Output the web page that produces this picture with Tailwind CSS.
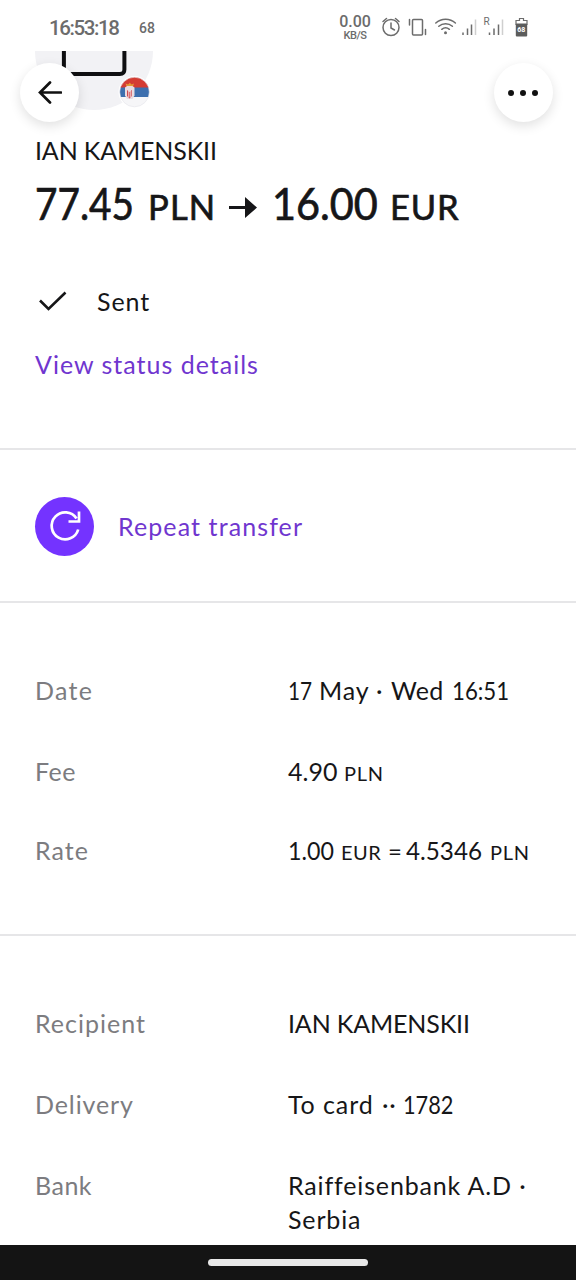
<!DOCTYPE html>
<html lang="en">
<head>
<meta charset="utf-8">
<title>Transfer details</title>
<script src="https://cdn.jsdelivr.net/npm/@tailwindcss/browser@4"></script>
</head>
<body class="bg-white">
<div class="flex h-[1280px] w-[576px] flex-col overflow-hidden bg-white font-['Lato','Noto_Sans',sans-serif] text-[25px] leading-[34px] text-[#161618]">
  <header class="flex h-[51px] shrink-0 items-start pl-[49px] font-['Roboto',sans-serif] text-[#6c6c6c]">
    <div class="mt-4 w-[90px] text-[20.5px] leading-6 font-medium tracking-[-1.4px]">16:53:18</div>
    <div class="mt-[18px] w-[197px] text-[14px] leading-5 font-medium">68</div>
    <div class="mt-[14px] flex w-[38px] flex-col items-center font-medium">
      <span class="text-[16px] leading-[16px]">0.00</span>
      <span class="text-[11px] leading-[11px] tracking-[-0.4px]">KB/S</span>
    </div>
    <svg class="ml-1 mt-3 h-8 w-[160px]" viewBox="378 12 160 32" fill="none" stroke="#6c6c6c" stroke-width="1.5" stroke-linecap="round">
      <circle cx="391" cy="27.5" r="8"/><path d="M391 23v5l3.5 2M383 21.5l3.5-3M399 21.5l-3.500-3"/>
      <rect x="412.500" y="19.500" width="10" height="15.500" rx="1"/><path d="M409.500 19.500v5.500M425.500 29.500v5"/>
      <path d="M435.800 23a14.500 14.500 0 0 1 19.600 0M438.800 26.300a10 10 0 0 1 13.600 0M441.800 29.300a6 6 0 0 1 7.600 0"/>
      <circle cx="445.500" cy="32.800" r="1.500" fill="#6c6c6c" stroke="none"/>
      <g stroke-linecap="butt"><path d="M463 32.500v2.500M467.500 28.500v6.500M471.500 24.500v10.500M489.500 32.500v2.500M494 28.500v6.500M498.500 24.500v10.500"/><path d="M475.500 19.500v15.500M502.500 19.500v15.500" stroke="#cfcfcf"/></g>
      <text x="483.500" y="25" font-size="10" fill="#6c6c6c" stroke="none">R</text>
      <path d="M519.500 18.500h4v2h3.500v4h-11v-4h3.500z" stroke-width="1.200"/>
      <rect x="515.800" y="23.500" width="11.400" height="13" rx="1" fill="#5c5c5c" stroke="none"/>
      <text x="517.200" y="31.500" font-size="7" font-weight="700" fill="#fff" stroke="none">68</text>
    </svg>
  </header>

  <main class="relative flex h-[1194px] shrink-0 flex-col overflow-hidden">
    <svg class="absolute left-0 top-0 h-[82px] w-[170px]" viewBox="0 51 170 82">
      <circle cx="94" cy="51" r="59" fill="#f2f2f5"/>
      <path d="M63.900 45v24.500q0 4.500 4.500 4.500h51.500q4.500 0 4.500-4.500V45" fill="none" stroke="#0f0f11" stroke-width="4"/>
      <circle cx="134.500" cy="92" r="16" fill="#fff"/>
      <clipPath id="flag"><circle cx="134.500" cy="92" r="14.700"/></clipPath>
      <g clip-path="url(#flag)">
        <path d="M119 76h31v12h-31z" fill="#d43c33"/><path d="M119 87.500h31v9.500h-31z" fill="#3d6fae"/><path d="M119 97h31v11h-31z" fill="#f6f6f8"/>
        <path d="M125 87.500l2-1.500h5.500l2 1.500v8l-2 3.500h-5.500l-2-3.500z" fill="#e9dbe0"/>
        <path d="M127 90l2.500 2 2.500-2v6l-2.500 2.500-2.500-2.500z" fill="#cf4a50"/>
        <path d="M128.800 91v6.500M130.800 91v6.500" stroke="#fff" stroke-width=".8"/>
        <path d="M126.500 86l-1-2.500 2.500 1 1.800-1.800 1.800 1.800 2.500-1-1 2.500z" fill="#e39a35"/>
      </g>
      <circle cx="134.500" cy="92" r="14.800" fill="none" stroke="#e4e4ea" stroke-width=".6"/>
    </svg>
    <button class="absolute left-5 top-3 grid size-[59px] place-items-center rounded-full bg-white shadow-[0_4px_12px_rgba(0,0,0,0.12)]">
      <svg class="h-6 w-6" viewBox="0 0 24 24" fill="none" stroke="#111" stroke-width="2.700" stroke-linecap="round"><path d="M23 11.500H2M12 1.500L2 11.500l10 10"/></svg>
    </button>
    <button class="absolute right-[23px] top-3 flex size-[59px] items-center justify-center gap-1.5 rounded-full bg-white pr-px shadow-[0_4px_12px_rgba(0,0,0,0.12)]">
      <span class="size-1.5 rounded-full bg-[#111]"></span><span class="size-1.5 rounded-full bg-[#111]"></span><span class="size-1.5 rounded-full bg-[#111]"></span>
    </button>

    <section class="flex h-[399px] shrink-0 flex-col items-start border-b-2 border-[#e6e6e8] px-[35px] pt-[82px]">
      <div class="tracking-[-0.15px]">IAN KAMENSKII</div>
      <h1 class="mt-2 flex h-14 items-baseline text-[44px] leading-[56px] whitespace-nowrap [-webkit-text-stroke:0.7px_#161618]">
        <span class="w-[113px] origin-left scale-x-[0.88]">77.45</span><span class="w-[81px] text-[34.500px] tracking-[1.2px]">PLN</span>
        <svg class="h-[29px] w-[43px] shrink-0" viewBox="0 0 43 29" fill="#161618"><path d="M0 15h16V6l12 10.500L16 27v-9H0z"/></svg>
        <span class="w-[118px] origin-left scale-x-[0.94]">16.00</span><span class="text-[34.500px] tracking-[0.8px]">EUR</span>
      </h1>
      <div class="mt-[53px] flex items-center">
        <svg class="mr-[30px] h-7 w-8" viewBox="0 0 32 28" fill="none" stroke="#161618" stroke-width="2.600"><path d="M5 13.500l8.500 8.500L30.500 5.500"/></svg>
        <span class="tracking-[0.9px]">Sent</span>
      </div>
      <a class="mt-[29px] tracking-[1px] text-[#7036cf]">View status details</a>
    </section>

    <section class="flex h-[153px] shrink-0 items-center border-b-2 border-[#e6e6e8] px-[35px] pt-px">
      <span class="mr-6 grid size-[59px] place-items-center rounded-full bg-[#7433ff]">
        <svg class="size-[34px]" viewBox="0 0 34 34" fill="none" stroke="#fff" stroke-width="2.700"><path d="M30.200 20.500A13.500 13.500 0 1 1 28.500 9.500M31 2.500v10H20.500"/></svg>
      </span>
      <span class="tracking-[1.1px] text-[#7036cf]">Repeat transfer</span>
    </section>

    <dl class="grid h-[333px] shrink-0 grid-cols-[253px_1fr] grid-rows-[81px_79px_34px] border-b-2 border-[#e6e6e8] pl-[35px] pt-[70px] whitespace-nowrap">
      <dt class="tracking-[1.3px] text-[#7c7c80]">Date</dt><dd class="flex"><span class="w-[31px] origin-left scale-x-[0.83]">17</span><span class="w-[57px] tracking-[0.9px]">May</span><span class="w-[15px]">·</span><span class="w-[61px] tracking-[0.3px]">Wed</span><span class="origin-left scale-x-[0.89]">16:51</span></dd>
      <dt class="tracking-[0.5px] text-[#7c7c80]">Fee</dt><dd class="flex items-baseline"><span class="w-14">4.90</span><span class="text-[20px] tracking-[0.7px]">PLN</span></dd>
      <dt class="tracking-[1px] text-[#7c7c80]">Rate</dt><dd class="flex items-baseline"><span class="w-[53px] origin-left scale-x-[0.93]">1.00</span><span class="w-[47px] text-[20px] tracking-[0.5px]">EUR</span><span class="w-[18px] text-[24px]">=</span><span class="w-[84px] origin-left scale-x-[0.97]">4.5346</span><span class="text-[20px] tracking-[0.7px]">PLN</span></dd>
    </dl>

    <dl class="grid shrink-0 grid-cols-[253px_1fr] grid-rows-[81px_81px_68px] pl-[35px] pt-[70px] whitespace-nowrap">
      <dt class="tracking-[1px] text-[#7c7c80]">Recipient</dt><dd class="tracking-[-0.15px]">IAN KAMENSKII</dd>
      <dt class="tracking-[0.9px] text-[#7c7c80]">Delivery</dt><dd class="flex"><span class="w-[94px] tracking-[0.9px]">To card</span><span class="w-[21px] tracking-[0.8px]">··</span><span class="origin-left scale-x-[0.87]">1782</span></dd>
      <dt class="tracking-[0.5px] text-[#7c7c80]">Bank</dt><dd class="tracking-[0.85px]">Raiffeisenbank A.D ·<br>Serbia</dd>
    </dl>
  </main>

  <footer class="flex h-[35px] shrink-0 justify-center bg-[#141414] pt-3.5">
    <div class="h-[7px] w-40 rounded-full bg-[#e8e8e8]"></div>
  </footer>
</div>
</body>
</html>
